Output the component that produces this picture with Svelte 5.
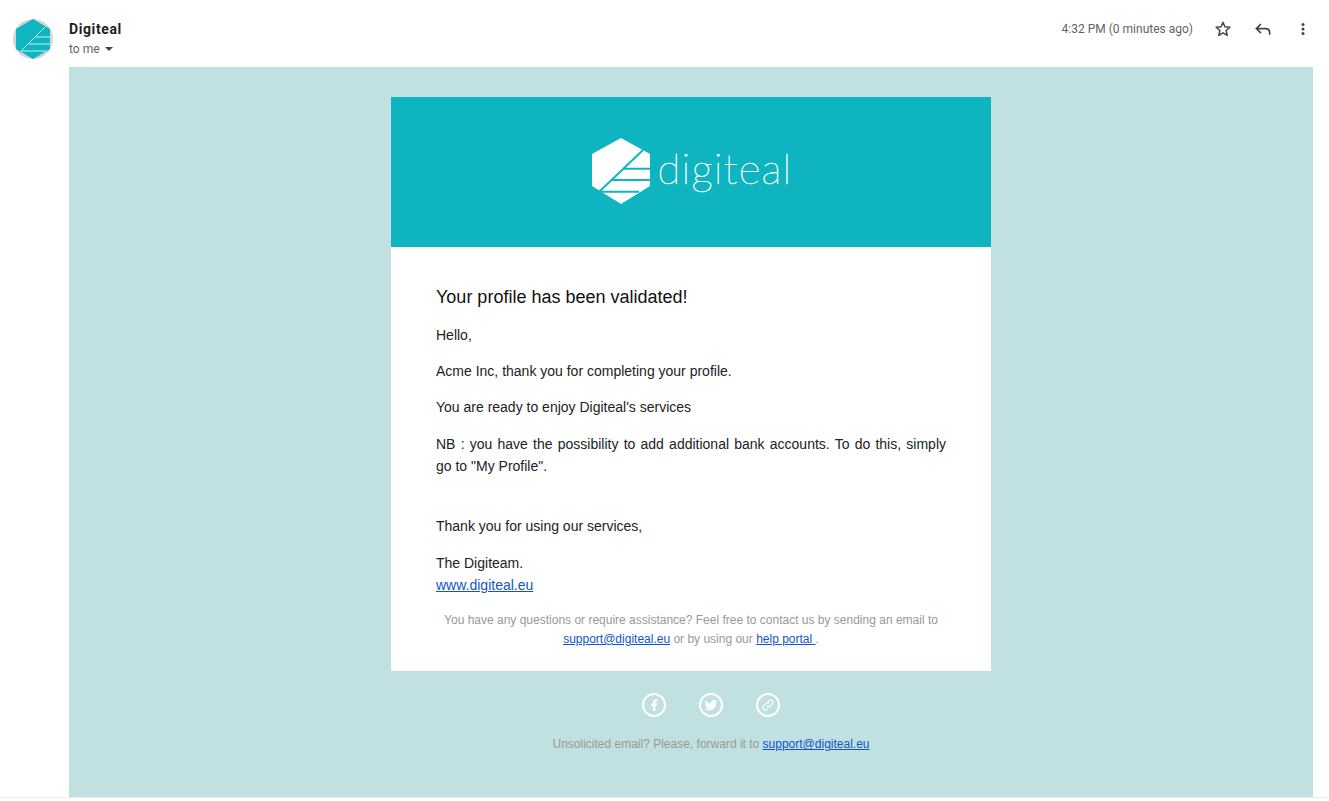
<script lang="ts">
    const paragraphs = [
        "Hello,",
        "Acme Inc, thank you for completing your profile.",
        "You are ready to enjoy Digiteal's services",
    ];
</script>

<div class="page">
    <header class="head">
        <div class="avatar">
            <svg viewBox="0 0 40 40" width="40" height="40" aria-hidden="true">
                <circle cx="20" cy="20" r="20" fill="#d3d5d6" />
                <path d="M20 0 37 10v20L20 40 3 30V10z" fill="#0fb5c1" />
                <path d="M8 32 32 8M22 18h15M15 25h22M8 32h25" stroke="#cfeef0" stroke-width="1" fill="none" />
            </svg>
        </div>
        <div class="sender">
            <div class="name">Digiteal</div>
            <div class="to">to me <span class="caret"></span></div>
        </div>
        <div class="meta">
            <span class="time">4:32 PM (0 minutes ago)</span>
            <svg class="ico" viewBox="0 0 24 24" width="20" height="20" aria-hidden="true">
                <path d="M12 3.800 14.300 9.400 20.300 9.900 15.700 13.800 17.100 19.700 12 16.600 6.900 19.700 8.300 13.800 3.700 9.900 9.700 9.400Z" fill="none" stroke="#444" stroke-width="1.800" stroke-linejoin="round" />
            </svg>
            <svg class="ico" viewBox="0 0 24 24" width="20" height="20" aria-hidden="true">
                <path d="M9.500 6 4 11.500 9.500 17M4.500 11.500H15c3 0 5 2 5 5V19" fill="none" stroke="#444" stroke-width="2" />
            </svg>
            <svg class="ico" viewBox="0 0 24 24" width="20" height="20" aria-hidden="true">
                <circle cx="12" cy="6.500" r="1.800" fill="#444" />
                <circle cx="12" cy="12" r="1.800" fill="#444" />
                <circle cx="12" cy="17.500" r="1.800" fill="#444" />
            </svg>
        </div>
    </header>

    <main class="panel">
        <div class="card">
            <div class="banner">
                <svg class="hex" viewBox="0 0 58 66" width="58" height="66" aria-hidden="true">
                    <path d="M29 0 58 16V48L29 66 0 48V16Z" fill="#fff" />
                    <path d="M7 54 51 12" stroke="#0fb5c1" stroke-width="2" fill="none" />
                    <path d="M31 30.700h27M19.500 42H58M7.500 53.700H47" stroke="#0fb5c1" stroke-width="2" fill="none" />
                </svg>
                <span class="wordmark">digiteal</span>
            </div>
            <div class="content">
                <h1>Your profile has been validated!</h1>
                {#each paragraphs as line}
                    <p>{line}</p>
                {/each}
                <p class="just">NB : you have the possibility to add additional bank accounts. To do this, simply go to "My Profile".</p>
                <p class="thanks">Thank you for using our services,</p>
                <p>The Digiteam.<br /><a href="#top">www.digiteal.eu</a></p>
                <p class="help">
                    You have any questions or require assistance? Feel free to contact us by sending an email to
                    <a href="#top">support@digiteal.eu</a> or by using our <a href="#top">help portal&nbsp;</a>.
                </p>
            </div>
        </div>

        <div class="foot">
            <div class="social">
                <span class="round">
                    <svg viewBox="0 0 24 24" width="24" height="24" aria-hidden="true">
                        <circle cx="12" cy="12" r="11" fill="none" stroke="#fff" stroke-width="2" />
                        <path d="M13.300 18v-5.300h1.900l.3-2.100h-2.200V9.300c0-.6.2-1 1-1h1.200V6.400c-.2 0-.9-.1-1.700-.1-1.700 0-2.800 1-2.800 2.900v1.400H9v2.100h2V18z" fill="#fff" />
                    </svg>
                </span>
                <span class="round">
                    <svg viewBox="0 0 24 24" width="24" height="24" aria-hidden="true">
                        <circle cx="12" cy="12" r="11" fill="none" stroke="#fff" stroke-width="2" />
                        <path d="M18.500 8.200c-.5.200-1 .4-1.500.4.500-.3 1-.8 1.200-1.400-.5.300-1.100.5-1.700.6a2.700 2.700 0 0 0-4.600 2.400c-2.200-.1-4.200-1.200-5.500-2.800-.7 1.200-.4 2.800.8 3.600-.4 0-.8-.1-1.200-.3 0 1.300.9 2.400 2.100 2.700-.4.100-.8.100-1.200 0 .3 1.100 1.300 1.800 2.500 1.900-1.100.8-2.500 1.200-3.900 1 3.900 2.500 11.900 1.100 11.700-6.900.5-.4 1-.8 1.300-1.200z" fill="#fff" />
                    </svg>
                </span>
                <span class="round">
                    <svg viewBox="0 0 24 24" width="24" height="24" aria-hidden="true">
                        <circle cx="12" cy="12" r="11" fill="none" stroke="#fff" stroke-width="2" />
                        <path d="M10.800 13.200a2.300 2.300 0 0 0 3.300 0l2.100-2.100a2.300 2.300 0 0 0-3.300-3.300l-.9.900M13.200 10.800a2.300 2.300 0 0 0-3.300 0l-2.100 2.100a2.300 2.300 0 0 0 3.300 3.300l.9-.9" fill="none" stroke="#fff" stroke-width="1.200" />
                    </svg>
                </span>
            </div>
            <p class="unsolicited">Unsolicited email? Please, forward it to <a href="#top">support@digiteal.eu</a></p>
        </div>
    </main>
    <div class="rule"></div>
</div>

<style>
    :global(body) {
        background: #fff;
    }

    .page {
        height: 801px;
        display: flex;
        flex-direction: column;
        overflow: hidden;
    }

    .head {
        height: 67px;
        flex: none;
        display: flex;
        padding: 0 16px 0 13px;
        box-sizing: border-box;
        font-family: Roboto, sans-serif;
    }

    .avatar {
        padding-top: 19px;
        width: 56px;
    }

    .avatar svg {
        display: block;
    }

    .sender {
        padding-top: 20px;
    }

    .name {
        font-size: 14px;
        font-weight: 700;
        line-height: 18px;
        letter-spacing: 0.6px;
        color: #202124;
    }

    .to {
        margin-top: 3px;
        font-size: 12px;
        line-height: 16px;
        color: #5f6368;
    }

    .caret {
        display: inline-block;
        width: 0;
        height: 0;
        margin: 0 0 2px 2px;
        border: 4px solid transparent;
        border-top-color: #444;
        border-bottom-width: 0;
    }

    .meta {
        margin-left: auto;
        display: flex;
        align-items: center;
        height: 20px;
        margin-top: 19px;
    }

    .time {
        font-size: 12px;
        color: #5f6368;
        margin-right: 20px;
    }

    .ico {
        display: block;
        margin-left: 20px;
    }

    .time + .ico {
        margin-left: 0;
    }

    .panel {
        flex: none;
        height: 730px;
        margin: 0 16px 0 69px;
        background: #c1e0e1;
        padding-top: 30px;
        box-sizing: border-box;
        font-family: "Liberation Sans", Arial, sans-serif;
    }

    .card {
        width: 600px;
        margin: 0 auto;
        background: #fff;
    }

    .banner {
        height: 150px;
        background: #0eb5c1;
        display: flex;
        align-items: center;
        justify-content: center;
        gap: 7px;
        padding-left: 3px;
    }

    .hex {
        margin-bottom: 2px;
    }

    .wordmark {
        font-family: Lato, sans-serif;
        font-weight: 100;
        font-size: 42px;
        line-height: 48px;
        letter-spacing: 1.2px;
        color: #fff;
        -webkit-text-stroke: 0.5px #fff;
        margin-bottom: 8px;
    }

    .content {
        padding: 37px 45px 22.500px;
        font-size: 14px;
        line-height: 1.6;
        color: #222;
    }

    h1 {
        margin: 0 0 13.700px;
        font-size: 18px;
        line-height: 26px;
        font-weight: 400;
        color: #111;
    }

    p {
        margin: 0 0 14px;
    }

    .just {
        text-align: justify;
    }

    .thanks {
        margin-top: 37.700px;
    }

    a {
        color: #1155cc;
        text-decoration: underline;
    }

    .help {
        margin: 14.400px 0 0;
        text-align: center;
        font-size: 12px;
        line-height: 19px;
        color: #999;
    }

    .foot {
        padding-left: 40px;
    }

    .social {
        display: flex;
        justify-content: center;
        gap: 33px;
        margin-top: 22px;
    }

    .round {
        display: block;
        height: 24px;
    }

    .round svg {
        display: block;
    }

    .unsolicited {
        margin: 18px 0 0;
        text-align: center;
        font-size: 12px;
        line-height: 18px;
        color: #999;
    }

    .rule {
        height: 1px;
        background: #eee;
    }
</style>
